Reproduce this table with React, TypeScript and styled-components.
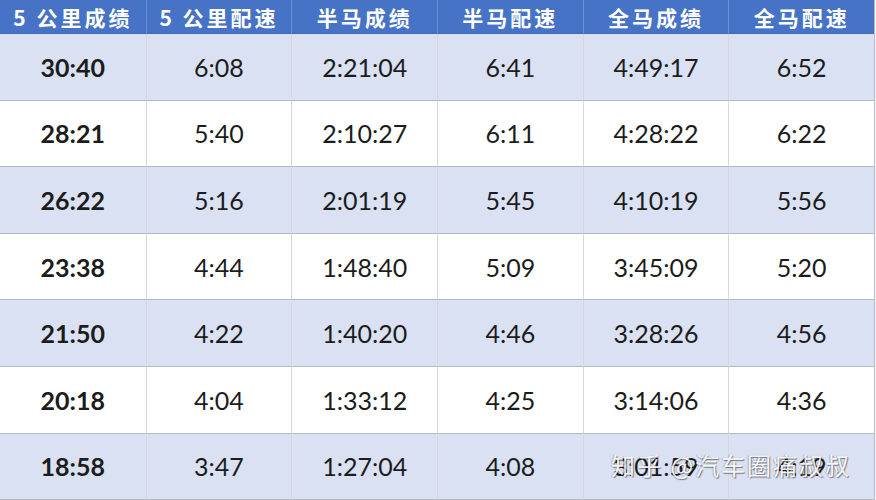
import styled, { createGlobalStyle } from "styled-components";

const GlobalStyle = createGlobalStyle`
  html, body {
    margin: 0;
    padding: 0;
    background: #ffffff;
  }
  body {
    font-family: Lato, "Noto Sans CJK SC", sans-serif;
  }
`;

const Page = styled.div`
  position: relative;
  width: 876px;
  height: 500px;
  overflow: hidden;
  background: #f4f4f4;
`;

const Table = styled.div`
  display: grid;
  grid-template-columns: repeat(6, 1fr);
  grid-template-rows: 34px repeat(7, 66.6px);
  width: 874px;
  border-right: 1px solid #b9bfca;
`;

const HeadCell = styled.div`
  display: flex;
  align-items: center;
  justify-content: center;
  background: #4673c5;
  color: #ffffff;
  font-family: "Noto Sans CJK SC", sans-serif;
  font-weight: 700;
  font-size: 21px;
  letter-spacing: 3px;
  border-left: 1px solid #6d90d0;
  border-bottom: 1px solid #3f68b4;
  &:first-child {
    border-left: none;
  }
`;

const Cell = styled.div<{ $shade: boolean; $bold: boolean }>`
  display: flex;
  align-items: center;
  justify-content: center;
  background: ${(p) => (p.$shade ? "#d9e1f2" : "#ffffff")};
  color: #1c1c1c;
  font-family: Lato, sans-serif;
  font-size: 25px;
  font-weight: ${(p) => (p.$bold ? 700 : 400)};
  border-left: 1px solid #d3d7de;
  border-bottom: 1.5px solid #b3b8c2;
  &:nth-child(6n + 1) {
    border-left: none;
  }
`;

// watermark sits over the last row, as in the source image
const Watermark = styled.div`
  position: absolute;
  left: 611px;
  top: 447px;
  font-family: "Noto Sans CJK SC", sans-serif;
  font-size: 24px;
  letter-spacing: 2px;
  color: rgba(255, 255, 255, 0.92);
  text-shadow: 1px 1px 1px rgba(0, 0, 0, 0.45), -1px 0 1px rgba(0, 0, 0, 0.2);
  white-space: nowrap;
`;

const headers = ["5 公里成绩", "5 公里配速", "半马成绩", "半马配速", "全马成绩", "全马配速"];

const rows = [
  ["30:40", "6:08", "2:21:04", "6:41", "4:49:17", "6:52"],
  ["28:21", "5:40", "2:10:27", "6:11", "4:28:22", "6:22"],
  ["26:22", "5:16", "2:01:19", "5:45", "4:10:19", "5:56"],
  ["23:38", "4:44", "1:48:40", "5:09", "3:45:09", "5:20"],
  ["21:50", "4:22", "1:40:20", "4:46", "3:28:26", "4:56"],
  ["20:18", "4:04", "1:33:12", "4:25", "3:14:06", "4:36"],
  ["18:58", "3:47", "1:27:04", "4:08", "3:01:59", "4:19"],
];

const App = () => {
  return (
    <>
      <GlobalStyle />
      <Page>
        <Table>
          {headers.map((h) => (
            <HeadCell key={h}>{h}</HeadCell>
          ))}
          {rows.map((row, r) =>
            row.map((val, c) => (
              <Cell key={r * 10 + c} $shade={r % 2 === 0} $bold={c === 0}>
                {val}
              </Cell>
            ))
          )}
        </Table>
        <Watermark>知乎 @汽车圈痛叔叔</Watermark>
      </Page>
    </>
  );
};

export default App;
